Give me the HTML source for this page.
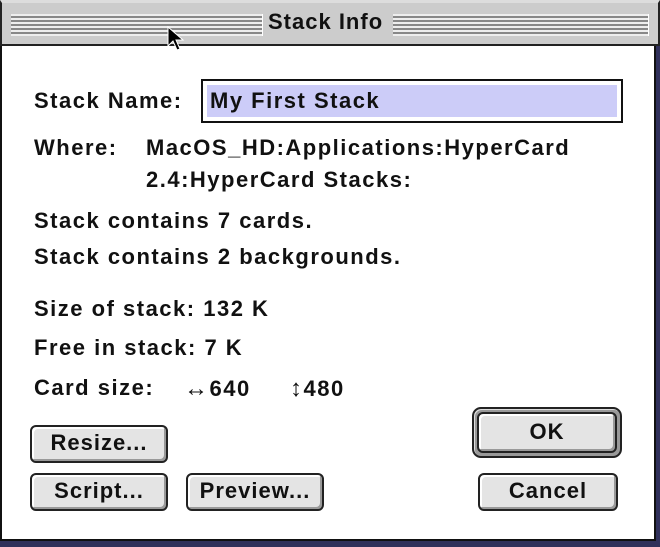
<!DOCTYPE html>
<html><head><style>
*{margin:0;padding:0;box-sizing:border-box}
body{width:660px;height:547px;background:#30305a;position:relative;overflow:hidden;font-family:"Liberation Sans",sans-serif;font-weight:bold;color:#111}
#win{position:absolute;left:0;top:0;width:656px;height:541px;background:#fff;border:2px solid #111;border-top:none}
#title{position:absolute;left:0;top:0;width:660px;height:46px;background:#ccc;border:2px solid #222;border-top:3px solid #ddd}
.stripes{position:absolute;top:11px;height:22px;background:repeating-linear-gradient(#eee 0 2px,#888 2px 4px);border-right:1px solid #fff}
.t{position:absolute;font-size:22px;white-space:nowrap;letter-spacing:1.5px}
.btn{position:absolute;background:#e4e4e4;border:2px solid #222;border-radius:6px;box-shadow:inset -2px -2px 0 #999,inset 2px 2px 0 #fff;font-size:22px;letter-spacing:1px;text-align:center;line-height:32px}
</style></head><body>
<div id="win"></div>
<div id="title">
<div class="stripes" style="left:9px;width:252px"></div>
<div class="stripes" style="left:391px;width:256px"></div>
<div class="t" style="left:266px;top:6px;letter-spacing:1px">Stack Info</div>
</div>
<svg style="position:absolute;left:166px;top:26px" width="20" height="30" viewBox="0 0 20 30"><path d="M2 1 L2 20 L7 15 L11 24 L14 23 L10 14 L17 14 Z" fill="#000" stroke="#fff" stroke-width="1"/></svg>
<div class="t" style="left:34px;top:88px">Stack Name:</div>
<div style="position:absolute;left:201px;top:79px;width:422px;height:44px;border:2px solid #111;background:#fff"><div style="position:absolute;left:4px;top:4px;right:4px;bottom:4px;background:#ccccf8"></div></div>
<div class="t" style="left:210px;top:88px">My First Stack</div>
<div class="t" style="left:34px;top:135px">Where:</div>
<div class="t" style="left:146px;top:135px">MacOS_HD:Applications:HyperCard</div>
<div class="t" style="left:146px;top:167px">2.4:HyperCard Stacks:</div>
<div class="t" style="left:34px;top:208px">Stack contains 7 cards.</div>
<div class="t" style="left:34px;top:244px">Stack contains 2 backgrounds.</div>
<div class="t" style="left:34px;top:296px">Size of stack: 132 K</div>
<div class="t" style="left:34px;top:335px">Free in stack: 7 K</div>
<div class="t" style="left:34px;top:375px">Card size:</div>
<div class="t" style="left:184px;top:375px"><span style="font-size:24px;font-weight:normal">↔</span>640</div>
<div class="t" style="left:290px;top:375px"><span style="font-size:24px;font-weight:normal">↕</span>480</div>
<div class="btn" style="left:30px;top:425px;width:138px;height:38px">Resize...</div>
<div class="btn" style="left:30px;top:473px;width:138px;height:38px">Script...</div>
<div class="btn" style="left:186px;top:473px;width:138px;height:38px">Preview...</div>
<div style="position:absolute;left:472px;top:407px;width:150px;height:51px;border:2px solid #222;border-radius:9px;background:#999;box-shadow:inset 1px 1px 0 #ddd"></div>
<div class="btn" style="left:477px;top:412px;width:140px;height:41px;line-height:36px">OK</div>
<div class="btn" style="left:478px;top:473px;width:140px;height:38px">Cancel</div>
</body></html>
